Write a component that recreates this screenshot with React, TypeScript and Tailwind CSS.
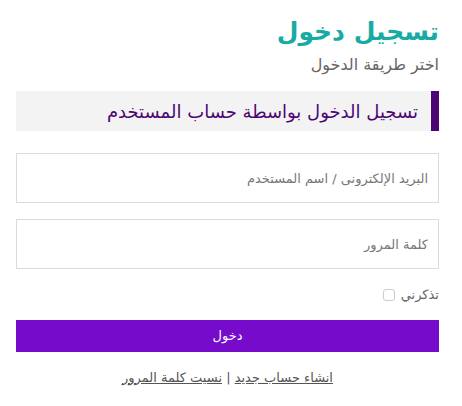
import React, { useState } from 'react';

export default function App() {
  const [remember, setRemember] = useState(false);

  return (
    <div dir="rtl" className="w-[462px] h-[406px] bg-white pl-[16px] pr-[23px] pt-[14px] font-['DejaVu_Sans',sans-serif] text-[#555]">
      <h1 className="text-[25px] leading-[36px] font-bold text-[#16aba5]">تسجيل دخول</h1>
      <p className="mt-[4px] text-[16px] leading-[22px] text-[#666]">اختر طريقة الدخول</p>

      <div className="mt-[15px] h-[40px] bg-[#f3f3f3] border-r-[8px] border-[#4c0673] flex items-center pr-[13px]">
        <h2 className="text-[18px] text-[#4c0673]">تسجيل الدخول بواسطة حساب المستخدم</h2>
      </div>

      <form className="mt-[22px] flex flex-col" onSubmit={(e) => e.preventDefault()}>
        <input
          type="text"
          placeholder="البريد الإلكترونى / اسم المستخدم"
          className="h-[50px] border border-[#dcdcdc] px-[10px] text-[13px] placeholder:text-[#777] outline-none"
        />
        <input
          type="password"
          placeholder="كلمة المرور"
          className="mt-[16px] h-[50px] border border-[#dcdcdc] px-[10px] text-[13px] placeholder:text-[#777] outline-none"
        />

        <label className="mt-[16px] flex items-center gap-[6px] text-[13px] text-[#666]">
          <span>تذكرني</span>
          <input
            type="checkbox"
            checked={remember}
            onChange={(e) => setRemember(e.target.checked)}
            className="appearance-none w-[12px] h-[12px] border border-[#ccc] rounded-[3px] checked:bg-[#760bcc]"
          />
        </label>

        <button
          type="submit"
          className="mt-[15px] h-[32px] bg-[#760bcc] text-white text-[13px]"
        >
          دخول
        </button>
      </form>

      <div className="mt-[16px] text-center text-[13px] text-[#555]">
        <a href="#" className="underline">انشاء حساب جديد</a>
        <span> | </span>
        <a href="#" className="underline">نسيت كلمة المرور</a>
      </div>
    </div>
  );
}
